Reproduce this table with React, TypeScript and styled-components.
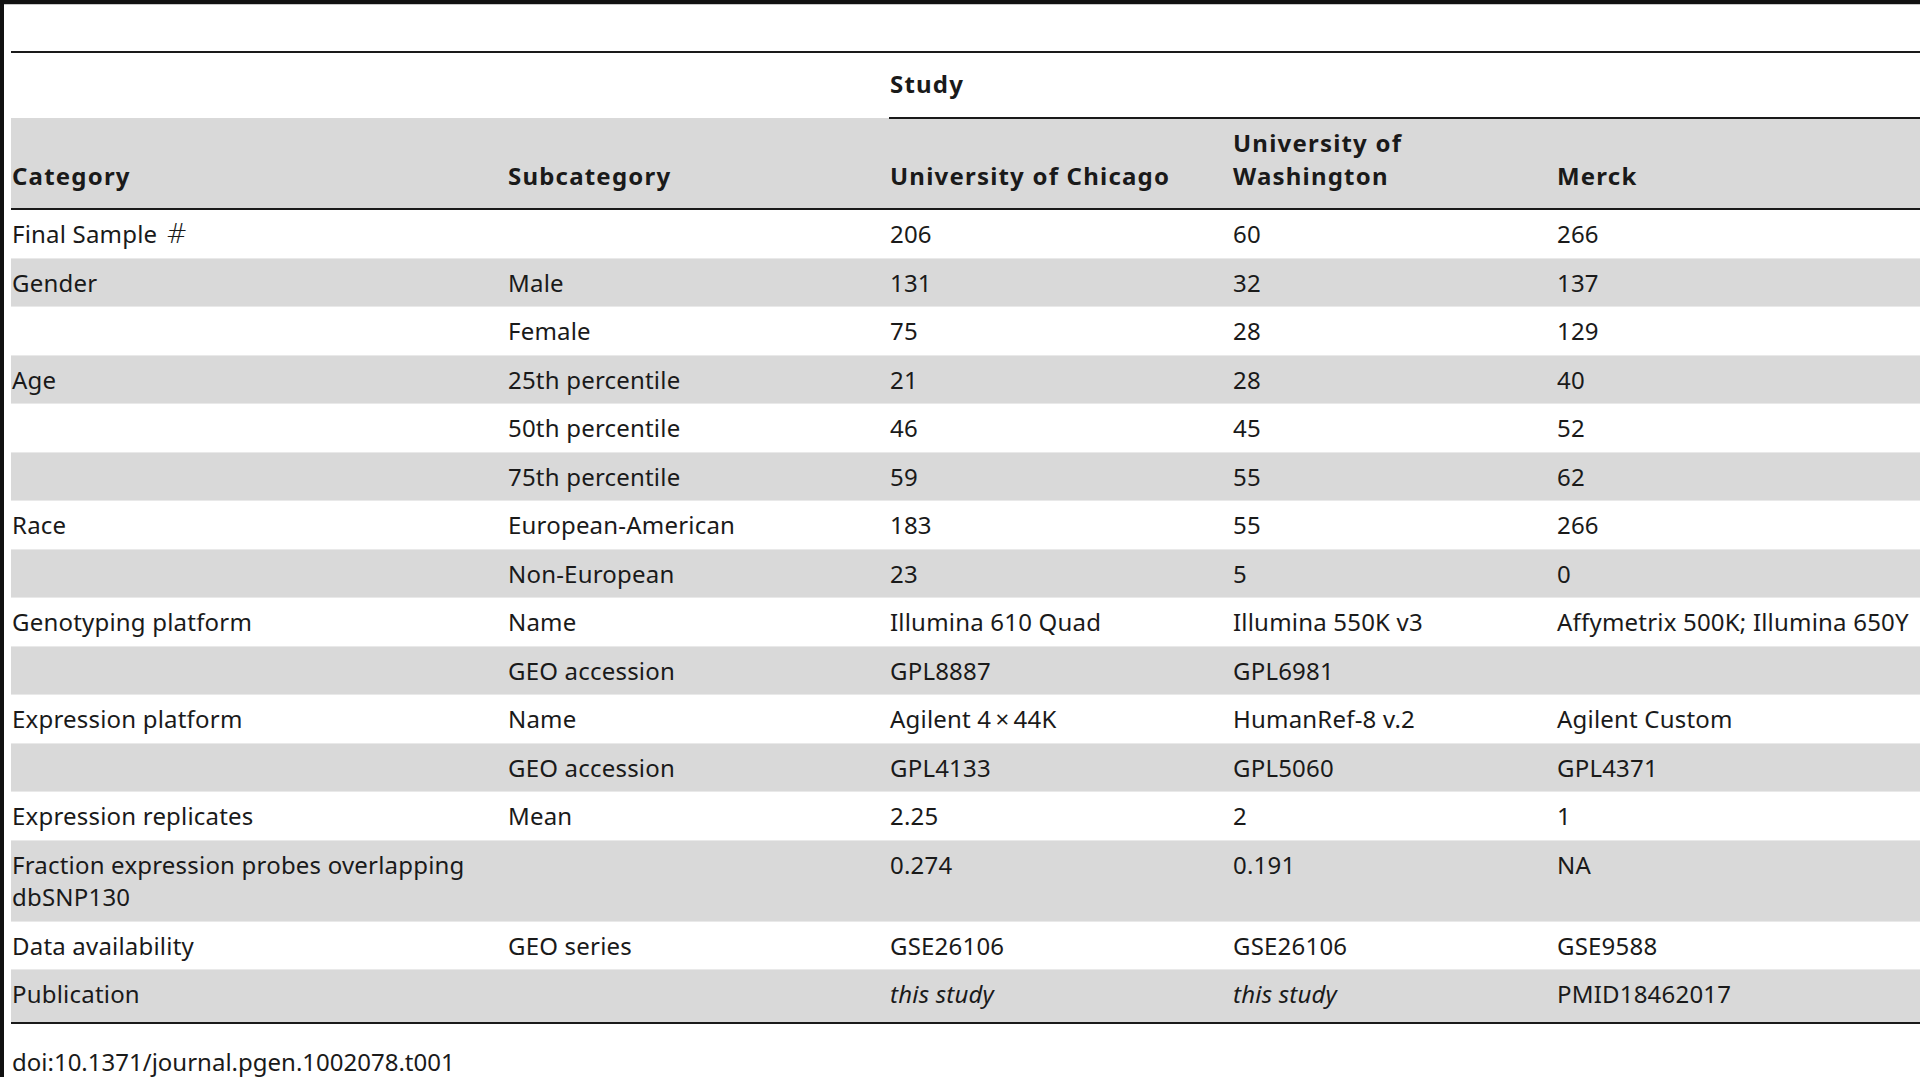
import React from 'react';
import styled, { createGlobalStyle } from 'styled-components';

const GlobalStyle = createGlobalStyle`
  html, body {
    margin: 0;
    padding: 0;
    background: #fff;
  }
  body {
    font-family: "Noto Sans", "Open Sans", sans-serif;
    color: #1a1a1a;
  }
`;

const Page = styled.div`
  min-height: 1077px;
  box-sizing: border-box;
  border-top: 4px solid #111;
  border-left: 4px solid #111;
  overflow: hidden;
`;

const Frame = styled.div`
  padding-left: 7px;
  padding-top: 46px;
  border-top: 1px solid #c8c8c8;
`;

const Table = styled.table`
  width: 1909px;
  table-layout: fixed;
  border-collapse: collapse;
  border-top: 2px solid #1a1a1a;
  border-bottom: 2px solid #1a1a1a;
  font-size: 24px;
`;

const StudyCell = styled.th<{ $underline?: boolean }>`
  text-align: left;
  font-weight: 700;
  letter-spacing: 1.2px;
  line-height: 33px;
  padding: 14px 1px 17px;
  vertical-align: middle;
  border-bottom: ${(p) => (p.$underline ? '2px solid #1a1a1a' : '0')};
`;

const HeadRow = styled.tr`
  background: #d9d9d9;
  border-bottom: 2px solid #1a1a1a;
`;

const HeadCell = styled.th`
  text-align: left;
  font-weight: 700;
  letter-spacing: 1.2px;
  line-height: 33px;
  padding: 7px 1px 16px;
  vertical-align: bottom;
  white-space: nowrap;
`;

const BodyRow = styled.tr<{ $shaded: boolean; $last: boolean }>`
  background: ${(p) => (p.$shaded ? '#d9d9d9' : '#fff')};
  border-bottom: ${(p) => (p.$last ? '0' : '1px solid #e9e9e9')};
`;

const Cell = styled.td<{ $last?: boolean }>`
  text-align: left;
  line-height: 32.5px;
  padding: 8px 1px ${(p) => (p.$last ? '11px' : '7px')};
  vertical-align: top;
  white-space: nowrap;
  letter-spacing: 0.2px;
`;

const Em = styled.span`
  font-style: italic;
`;

const Hash = styled.span`
  font-family: "DejaVu Sans ExtraLight", "DejaVu Sans", sans-serif;
  font-weight: 200;
  font-size: 26px;
  margin-left: 2px;
`;

const Caption = styled.div`
  font-size: 24px;
  line-height: 33px;
  margin-top: 21px;
  padding-left: 1px;
`;

interface Row {
  category?: React.ReactNode;
  sub?: string;
  values: React.ReactNode[];
}

const rows: Row[] = [
  { category: <>Final Sample <Hash>#</Hash></>, values: ['206', '60', '266'] },
  { category: 'Gender', sub: 'Male', values: ['131', '32', '137'] },
  { sub: 'Female', values: ['75', '28', '129'] },
  { category: 'Age', sub: '25th percentile', values: ['21', '28', '40'] },
  { sub: '50th percentile', values: ['46', '45', '52'] },
  { sub: '75th percentile', values: ['59', '55', '62'] },
  { category: 'Race', sub: 'European-American', values: ['183', '55', '266'] },
  { sub: 'Non-European', values: ['23', '5', '0'] },
  {
    category: 'Genotyping platform',
    sub: 'Name',
    values: ['Illumina 610 Quad', 'Illumina 550K v3', 'Affymetrix 500K; Illumina 650Y'],
  },
  { sub: 'GEO accession', values: ['GPL8887', 'GPL6981', ''] },
  {
    category: 'Expression platform',
    sub: 'Name',
    values: ['Agilent 4\u2009\u00d7\u200944K', 'HumanRef-8 v.2', 'Agilent Custom'],
  },
  { sub: 'GEO accession', values: ['GPL4133', 'GPL5060', 'GPL4371'] },
  { category: 'Expression replicates', sub: 'Mean', values: ['2.25', '2', '1'] },
  {
    category: <>Fraction expression probes overlapping<br />dbSNP130</>,
    values: ['0.274', '0.191', 'NA'],
  },
  { category: 'Data availability', sub: 'GEO series', values: ['GSE26106', 'GSE26106', 'GSE9588'] },
  {
    category: 'Publication',
    values: [<Em>this study</Em>, <Em>this study</Em>, 'PMID18462017'],
  },
];

const App: React.FC = () => {
  return (
    <>
      <GlobalStyle />
      <Page>
        <Frame>
          <Table>
            <colgroup>
              <col style={{ width: 496 }} />
              <col style={{ width: 382 }} />
              <col style={{ width: 343 }} />
              <col style={{ width: 324 }} />
              <col />
            </colgroup>
            <thead>
              <tr>
                <StudyCell />
                <StudyCell />
                <StudyCell colSpan={3} $underline>
                  Study
                </StudyCell>
              </tr>
              <HeadRow>
                <HeadCell>Category</HeadCell>
                <HeadCell>Subcategory</HeadCell>
                <HeadCell>University of Chicago</HeadCell>
                <HeadCell>
                  University of
                  <br />
                  Washington
                </HeadCell>
                <HeadCell>Merck</HeadCell>
              </HeadRow>
            </thead>
            <tbody>
              {rows.map((row, i) => {
                const last = i === rows.length - 1;
                return (
                  <BodyRow key={i} $shaded={i % 2 === 1} $last={last}>
                    <Cell $last={last}>{row.category}</Cell>
                    <Cell $last={last}>{row.sub}</Cell>
                    {row.values.map((v, j) => (
                      <Cell key={j} $last={last}>
                        {v}
                      </Cell>
                    ))}
                  </BodyRow>
                );
              })}
            </tbody>
          </Table>
          <Caption>doi:10.1371/journal.pgen.1002078.t001</Caption>
        </Frame>
      </Page>
    </>
  );
};

export default App;
